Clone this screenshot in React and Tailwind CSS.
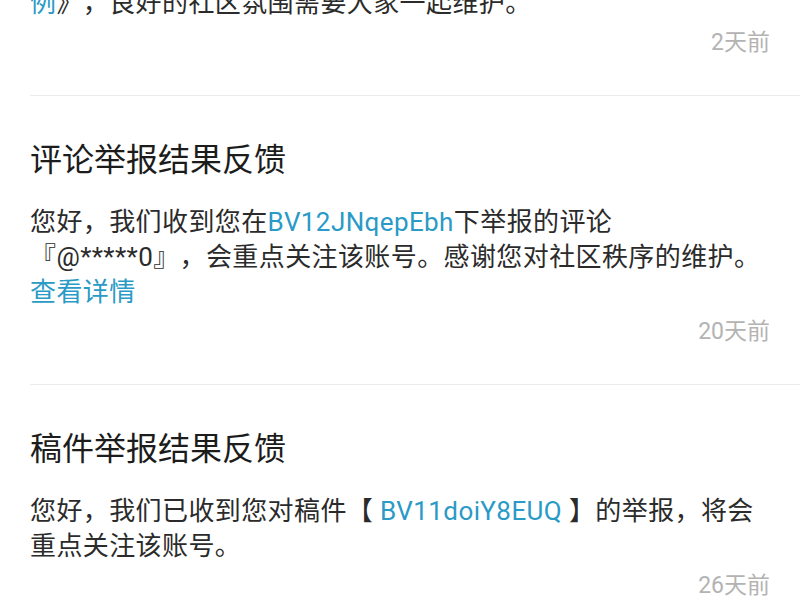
import React from 'react';

const font = { fontFamily: '"Roboto", "Noto Sans CJK SC", sans-serif' };

const Link = ({ children }) => <span className="text-[#2a9ac6]">{children}</span>;

const Notice = ({ title, lines, time, partial }) => (
  <section className={`ml-[30px] border-b border-[#ebebeb] pb-[37px] ${partial ? '-mt-[14px]' : 'pt-[44px]'}`}>
    {title && (
      <h2 className="text-[32px] leading-[40px] text-[#1c1c1c] mb-[25px]">{title}</h2>
    )}
    <div className="pr-[30px] text-[26px] leading-[35px] text-[#2b2b2b] tracking-[0.4px]">
      {lines.map((line, i) => (
        <div key={i} className="whitespace-nowrap">{line}</div>
      ))}
    </div>
    <div className="pr-[30px] mt-[7px] text-right text-[23px] leading-[30px] text-[#b3b3b3]">{time}</div>
  </section>
);

export default function App() {
  return (
    <div className="w-[800px] h-[600px] overflow-hidden bg-white [text-spacing-trim:space-all]" style={font}>
      <Notice
        partial
        lines={[<><Link>例</Link>》，良好的社区氛围需要大家一起维护。</>]}
        time="2天前"
      />
      <Notice
        title="评论举报结果反馈"
        lines={[
          <>您好，我们收到您在<Link>BV12JNqepEbh</Link>下举报的评论</>,
          <>『@*****0』，会重点关注该账号。感谢您对社区秩序的维护。</>,
          <Link>查看详情</Link>,
        ]}
        time="20天前"
      />
      <Notice
        title="稿件举报结果反馈"
        lines={[
          <>您好，我们已收到您对稿件【 <Link>BV11doiY8EUQ</Link> 】的举报，将会</>,
          <>重点关注该账号。</>,
        ]}
        time="26天前"
      />
    </div>
  );
}
